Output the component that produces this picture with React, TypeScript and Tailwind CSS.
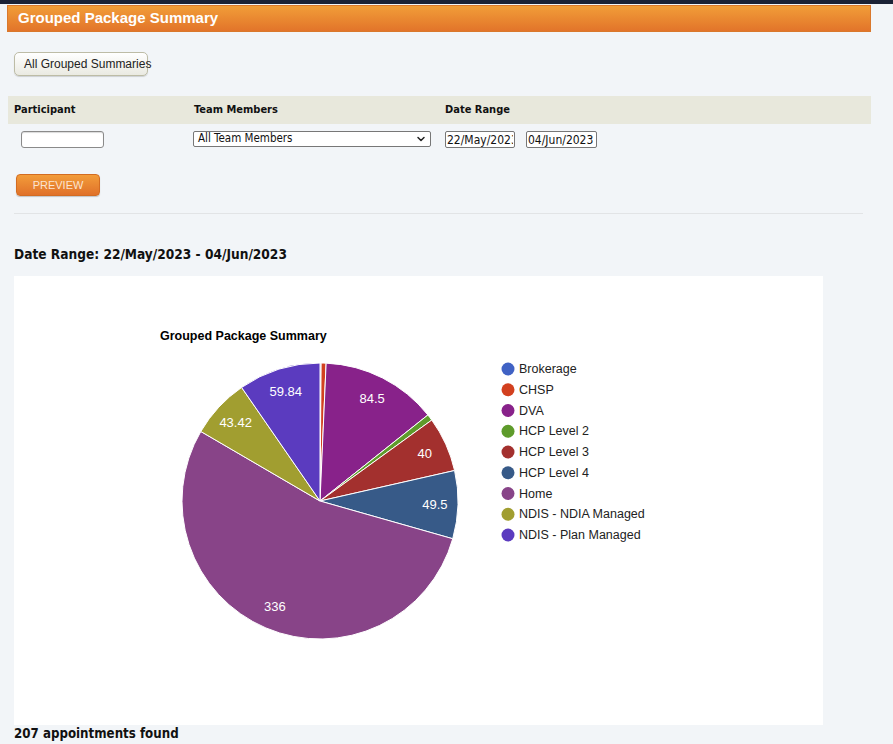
import React from "react";
import { ChevronDown } from "lucide-react";

type Slice = { name: string; value: number; color: string };

const slices: Slice[] = [
  { name: "Brokerage", value: 0.8, color: "#4062c4" },
  { name: "CHSP", value: 3.6, color: "#d2401f" },
  { name: "DVA", value: 84.5, color: "#88228a" },
  { name: "HCP Level 2", value: 4.6, color: "#5e9b2b" },
  { name: "HCP Level 3", value: 40, color: "#a3302e" },
  { name: "HCP Level 4", value: 49.5, color: "#375a88" },
  { name: "Home", value: 336, color: "#884488" },
  { name: "NDIS - NDIA Managed", value: 43.42, color: "#a19e30" },
  { name: "NDIS - Plan Managed", value: 59.84, color: "#5b3bbf" },
];

const CX = 306;
const CY = 225;
const R = 138;
const LABEL_R = 115;

function pt(angle: number, r: number) {
  const rad = (angle * Math.PI) / 180;
  return [CX + r * Math.sin(rad), CY - r * Math.cos(rad)];
}

function PieChart() {
  const total = slices.reduce((s, x) => s + x.value, 0);
  let start = 0;
  const parts = slices.map((s) => {
    const sweep = (s.value / total) * 360;
    const a0 = start;
    const a1 = start + sweep;
    start = a1;
    const [x0, y0] = pt(a0, R);
    const [x1, y1] = pt(a1, R);
    const large = sweep > 180 ? 1 : 0;
    const d = `M ${CX} ${CY} L ${x0} ${y0} A ${R} ${R} 0 ${large} 1 ${x1} ${y1} Z`;
    const [lx, ly] = pt((a0 + a1) / 2, LABEL_R);
    return { ...s, d, lx, ly, sweep };
  });

  return (
    <svg width="809" height="449" viewBox="0 0 809 449" style={{ fontFamily: '"Liberation Sans", Arial, sans-serif' }}>
      <text x="146" y="64" fontSize="12.5" fontWeight="bold" fill="#000">
        Grouped Package Summary
      </text>
      {parts.map((p) => (
        <path key={p.name} d={p.d} fill={p.color} stroke="#ffffff" strokeWidth="1" />
      ))}
      {parts
        .filter((p) => p.sweep > 10)
        .map((p) => (
          <text
            key={p.name + "-l"}
            x={p.lx}
            y={p.ly}
            fontSize="13"
            fill="#ffffff"
            textAnchor="middle"
            dominantBaseline="central"
          >
            {String(p.value)}
          </text>
        ))}
      {/* legend */}
      {slices.map((s, i) => (
        <g key={s.name + "-leg"}>
          <circle cx="494" cy={93 + i * 20.75} r="6.5" fill={s.color} />
          <text x="505" y={93 + i * 20.75} fontSize="12.5" fill="#222" dominantBaseline="central">
            {s.name}
          </text>
        </g>
      ))}
    </svg>
  );
}

export default function App() {
  const labelFont = { fontFamily: '"DejaVu Sans Condensed", "DejaVu Sans", sans-serif' };
  return (
    <div className="min-h-screen bg-[#f2f5f8]" style={labelFont}>
      <div className="h-[4px] bg-[#1b2236]" />
      <div className="ml-[7px] w-[864px] pt-px">
        {/* title bar */}
        <div
          className="flex h-[27px] items-center border border-[#d9782c] bg-gradient-to-b from-[#f19d38] to-[#e2742a] pl-[10px] text-[15px] font-bold text-white"
          style={{ fontFamily: '"Liberation Sans", Arial, sans-serif' }}
        >
          Grouped Package Summary
        </div>

        <div className="pl-[7px] pt-[20px]">
          <button
            className="flex h-[24px] w-[134px] items-center whitespace-nowrap rounded-[5px] border border-[#bdbca6] bg-gradient-to-b from-white to-[#eaeae2] pl-[9px] text-[12px] text-[#222] shadow-[0_1px_1px_rgba(0,0,0,0.15)]"
            style={{ fontFamily: '"Liberation Sans", Arial, sans-serif' }}
          >
            All Grouped Summaries
          </button>
        </div>

        {/* filters */}
        <div className="ml-px mt-[20px]">
          <div className="grid h-[28px] grid-cols-[180px_251px_1fr] items-center bg-[#e8e8dc] text-[11px] font-bold text-[#111]">
            <div className="px-[6px]">Participant</div>
            <div className="px-[6px]">Team Members</div>
            <div className="px-[6px]">Date Range</div>
          </div>
          <div className="grid grid-cols-[180px_251px_1fr] pt-[7px] text-[11.5px]">
            <div className="pl-[13px]">
              <input
                className="h-[17px] w-[83px] rounded-[3px] border border-[#8a8a8a] bg-white shadow-[inset_0_1px_1px_rgba(0,0,0,0.15)]"
                style={labelFont}
              />
            </div>
            <div className="pl-[5px]">
              <div className="flex h-[16px] w-[238px] items-center justify-between rounded-[2px] border border-[#777] bg-white pl-[4px] pr-[3px] text-[#111]">
                <span>All Team Members</span>
                <ChevronDown className="h-[12px] w-[12px] text-[#222]" strokeWidth={3} />
              </div>
            </div>
            <div className="flex gap-[11px] pl-[6px]">
              <input
                readOnly
                value="22/May/2023"
                className="h-[17px] w-[70px] rounded-[2px] border border-[#777] bg-white px-[1px] text-[12px] text-[#111]"
                style={labelFont}
              />
              <input
                readOnly
                value="04/Jun/2023"
                className="h-[17px] w-[71px] rounded-[2px] border border-[#777] bg-white px-[1px] text-[12px] text-[#111]"
                style={labelFont}
              />
            </div>
          </div>
        </div>

        <div className="pl-[9px] pt-[26px]">
          <button
            className="flex h-[22px] w-[84px] items-center justify-center rounded-[4px] border border-[#d36c22] bg-gradient-to-b from-[#f29c3a] to-[#e0712a] text-[11px] text-[#fbe4d2] shadow-[0_1px_1px_rgba(0,0,0,0.2)]"
            style={{ fontFamily: '"Liberation Sans", Arial, sans-serif' }}
          >
            PREVIEW
          </button>
        </div>

        <div className="ml-[7px] mr-[8px] mt-[17px] border-t border-[#e2e4e6]" />

        <div className="pl-[7px] pt-[32px] text-[13.6px] font-bold leading-[16px] text-[#111]">
          Date Range: 22/May/2023 - 04/Jun/2023
        </div>

        <div className="ml-[7px] mt-[14px] h-[449px] w-[809px] bg-white">
          <PieChart />
        </div>

        <div className="pl-[7px] pt-px text-[13.2px] font-bold leading-[16px] text-[#111]">207 appointments found</div>
      </div>
    </div>
  );
}
